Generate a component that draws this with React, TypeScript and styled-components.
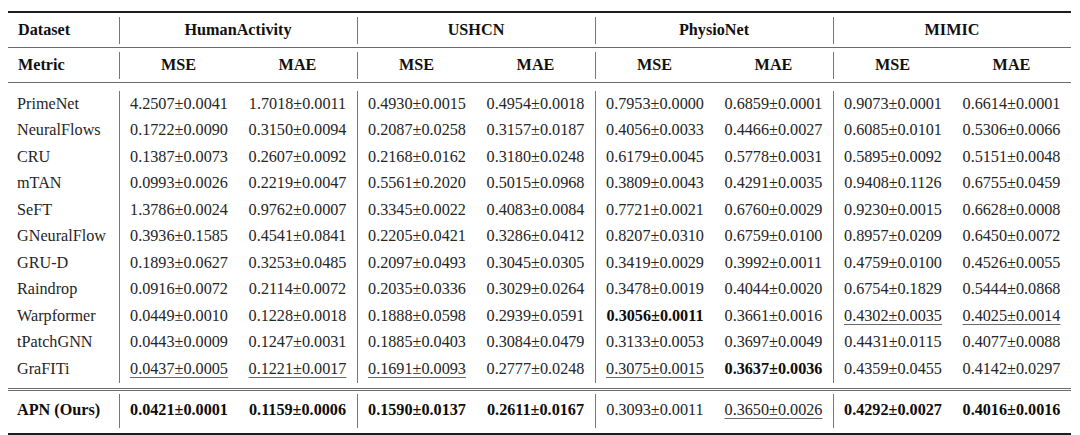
import React from 'react';
import styled, { createGlobalStyle, css } from 'styled-components';

const Global = createGlobalStyle`
  html, body { margin: 0; padding: 0; background: #ffffff; }
  body { font-family: "Liberation Serif", "Times New Roman", serif; color: #1c1c1c; }
`;

const COLS = '111px repeat(8, 119px)';

const Page = styled.div`
  padding: 11px 0 0 8px;
`;

const Table = styled.div`
  width: 1063px;
  border-top: 2px solid #1e1e1e;
  border-bottom: 2px solid #1e1e1e;
  font-family: "Liberation Serif", "Times New Roman", serif;
  font-size: 16.2px;
`;

const HeadRow = styled.div`
  display: grid;
  grid-template-columns: ${COLS};
  height: 34px;
  align-items: center;
  border-bottom: 1px solid #6a6a6a;
`;

const Body = styled.div`
  padding: 5px 0 4px;
`;

const FootRule = styled.div`
  height: 3px;
  border-top: 1px solid #6a6a6a;
  border-bottom: 1px solid #6a6a6a;
  box-sizing: border-box;
`;

const Foot = styled.div`
  padding: 3px 0 5px;
`;

const DataRow = styled.div<{ $first?: boolean; $last?: boolean }>`
  display: grid;
  grid-template-columns: ${COLS};
  height: 26.5px;
  ${(p) => p.$first && css`padding-top: 3px;`}
  ${(p) => p.$last && css`padding-bottom: 1px;`}
`;

const FootRow = styled.div`
  display: grid;
  grid-template-columns: ${COLS};
  height: 34px;
`;

const HeadCell = styled.div<{ $span?: number; $divider?: boolean; $left?: boolean }>`
  position: relative;
  height: 100%;
  display: flex;
  align-items: center;
  justify-content: ${(p) => (p.$left ? 'flex-start' : 'center')};
  padding-left: ${(p) => (p.$left ? '10px' : '0')};
  font-weight: bold;
  color: #111;
  grid-column: span ${(p) => p.$span ?? 1};
  ${(p) =>
    p.$divider &&
    css`
      &::before {
        content: '';
        position: absolute;
        left: 0;
        top: 4px;
        bottom: 3px;
        border-left: 1px solid #777;
      }
    `}
`;

const Cell = styled.div<{ $divider?: boolean; $left?: boolean; $bold?: boolean }>`
  display: flex;
  align-items: center;
  justify-content: ${(p) => (p.$left ? 'flex-start' : 'center')};
  padding-left: ${(p) => (p.$left ? '9px' : '0')};
  font-weight: ${(p) => (p.$bold ? 'bold' : 'normal')};
  color: ${(p) => (p.$bold ? '#0d0d0d' : '#262626')};
  border-left: ${(p) => (p.$divider ? '1px solid #777' : '0')};
  white-space: nowrap;
`;

const Under = styled.span`
  text-decoration: underline;
  text-decoration-thickness: 1px;
  text-underline-offset: 3px;
  text-decoration-color: #6a6a6a;
`;

const rows: string[][] = [
  ['PrimeNet', '4.2507±0.0041', '1.7018±0.0011', '0.4930±0.0015', '0.4954±0.0018', '0.7953±0.0000', '0.6859±0.0001', '0.9073±0.0001', '0.6614±0.0001'],
  ['NeuralFlows', '0.1722±0.0090', '0.3150±0.0094', '0.2087±0.0258', '0.3157±0.0187', '0.4056±0.0033', '0.4466±0.0027', '0.6085±0.0101', '0.5306±0.0066'],
  ['CRU', '0.1387±0.0073', '0.2607±0.0092', '0.2168±0.0162', '0.3180±0.0248', '0.6179±0.0045', '0.5778±0.0031', '0.5895±0.0092', '0.5151±0.0048'],
  ['mTAN', '0.0993±0.0026', '0.2219±0.0047', '0.5561±0.2020', '0.5015±0.0968', '0.3809±0.0043', '0.4291±0.0035', '0.9408±0.1126', '0.6755±0.0459'],
  ['SeFT', '1.3786±0.0024', '0.9762±0.0007', '0.3345±0.0022', '0.4083±0.0084', '0.7721±0.0021', '0.6760±0.0029', '0.9230±0.0015', '0.6628±0.0008'],
  ['GNeuralFlow', '0.3936±0.1585', '0.4541±0.0841', '0.2205±0.0421', '0.3286±0.0412', '0.8207±0.0310', '0.6759±0.0100', '0.8957±0.0209', '0.6450±0.0072'],
  ['GRU-D', '0.1893±0.0627', '0.3253±0.0485', '0.2097±0.0493', '0.3045±0.0305', '0.3419±0.0029', '0.3992±0.0011', '0.4759±0.0100', '0.4526±0.0055'],
  ['Raindrop', '0.0916±0.0072', '0.2114±0.0072', '0.2035±0.0336', '0.3029±0.0264', '0.3478±0.0019', '0.4044±0.0020', '0.6754±0.1829', '0.5444±0.0868'],
  ['Warpformer', '0.0449±0.0010', '0.1228±0.0018', '0.1888±0.0598', '0.2939±0.0591', '*0.3056±0.0011', '0.3661±0.0016', '_0.4302±0.0035', '_0.4025±0.0014'],
  ['tPatchGNN', '0.0443±0.0009', '0.1247±0.0031', '0.1885±0.0403', '0.3084±0.0479', '0.3133±0.0053', '0.3697±0.0049', '0.4431±0.0115', '0.4077±0.0088'],
  ['GraFITi', '_0.0437±0.0005', '_0.1221±0.0017', '_0.1691±0.0093', '0.2777±0.0248', '_0.3075±0.0015', '*0.3637±0.0036', '0.4359±0.0455', '0.4142±0.0297'],
];

const ours: string[] = ['*APN (Ours)', '*0.0421±0.0001', '*0.1159±0.0006', '*0.1590±0.0137', '*0.2611±0.0167', '0.3093±0.0011', '_0.3650±0.0026', '*0.4292±0.0027', '*0.4016±0.0016'];

const groups = ['HumanActivity', 'USHCN', 'PhysioNet', 'MIMIC'];

function renderCell(v: string, i: number) {
  const bold = v.startsWith('*');
  const under = v.startsWith('_');
  const text = bold || under ? v.slice(1) : v;
  return (
    <Cell key={i} $left={i === 0} $divider={i % 2 === 1} $bold={bold}>
      {under ? <Under>{text}</Under> : text}
    </Cell>
  );
}

export default function App() {
  return (
    <Page>
      <Global />
      <Table>
        <HeadRow>
          <HeadCell $left>Dataset</HeadCell>
          {groups.map((g) => (
            <HeadCell key={g} $span={2} $divider>
              {g}
            </HeadCell>
          ))}
        </HeadRow>
        <HeadRow>
          <HeadCell $left>Metric</HeadCell>
          {groups.flatMap((g) => [
            <HeadCell key={g + 'mse'} $divider>MSE</HeadCell>,
            <HeadCell key={g + 'mae'}>MAE</HeadCell>,
          ])}
        </HeadRow>
        <Body>
          {rows.map((r, ri) => (
            <DataRow key={r[0]} $first={ri === 0} $last={ri === rows.length - 1}>
              {r.map(renderCell)}
            </DataRow>
          ))}
        </Body>
        <FootRule />
        <Foot>
          <FootRow>{ours.map(renderCell)}</FootRow>
        </Foot>
      </Table>
    </Page>
  );
}
